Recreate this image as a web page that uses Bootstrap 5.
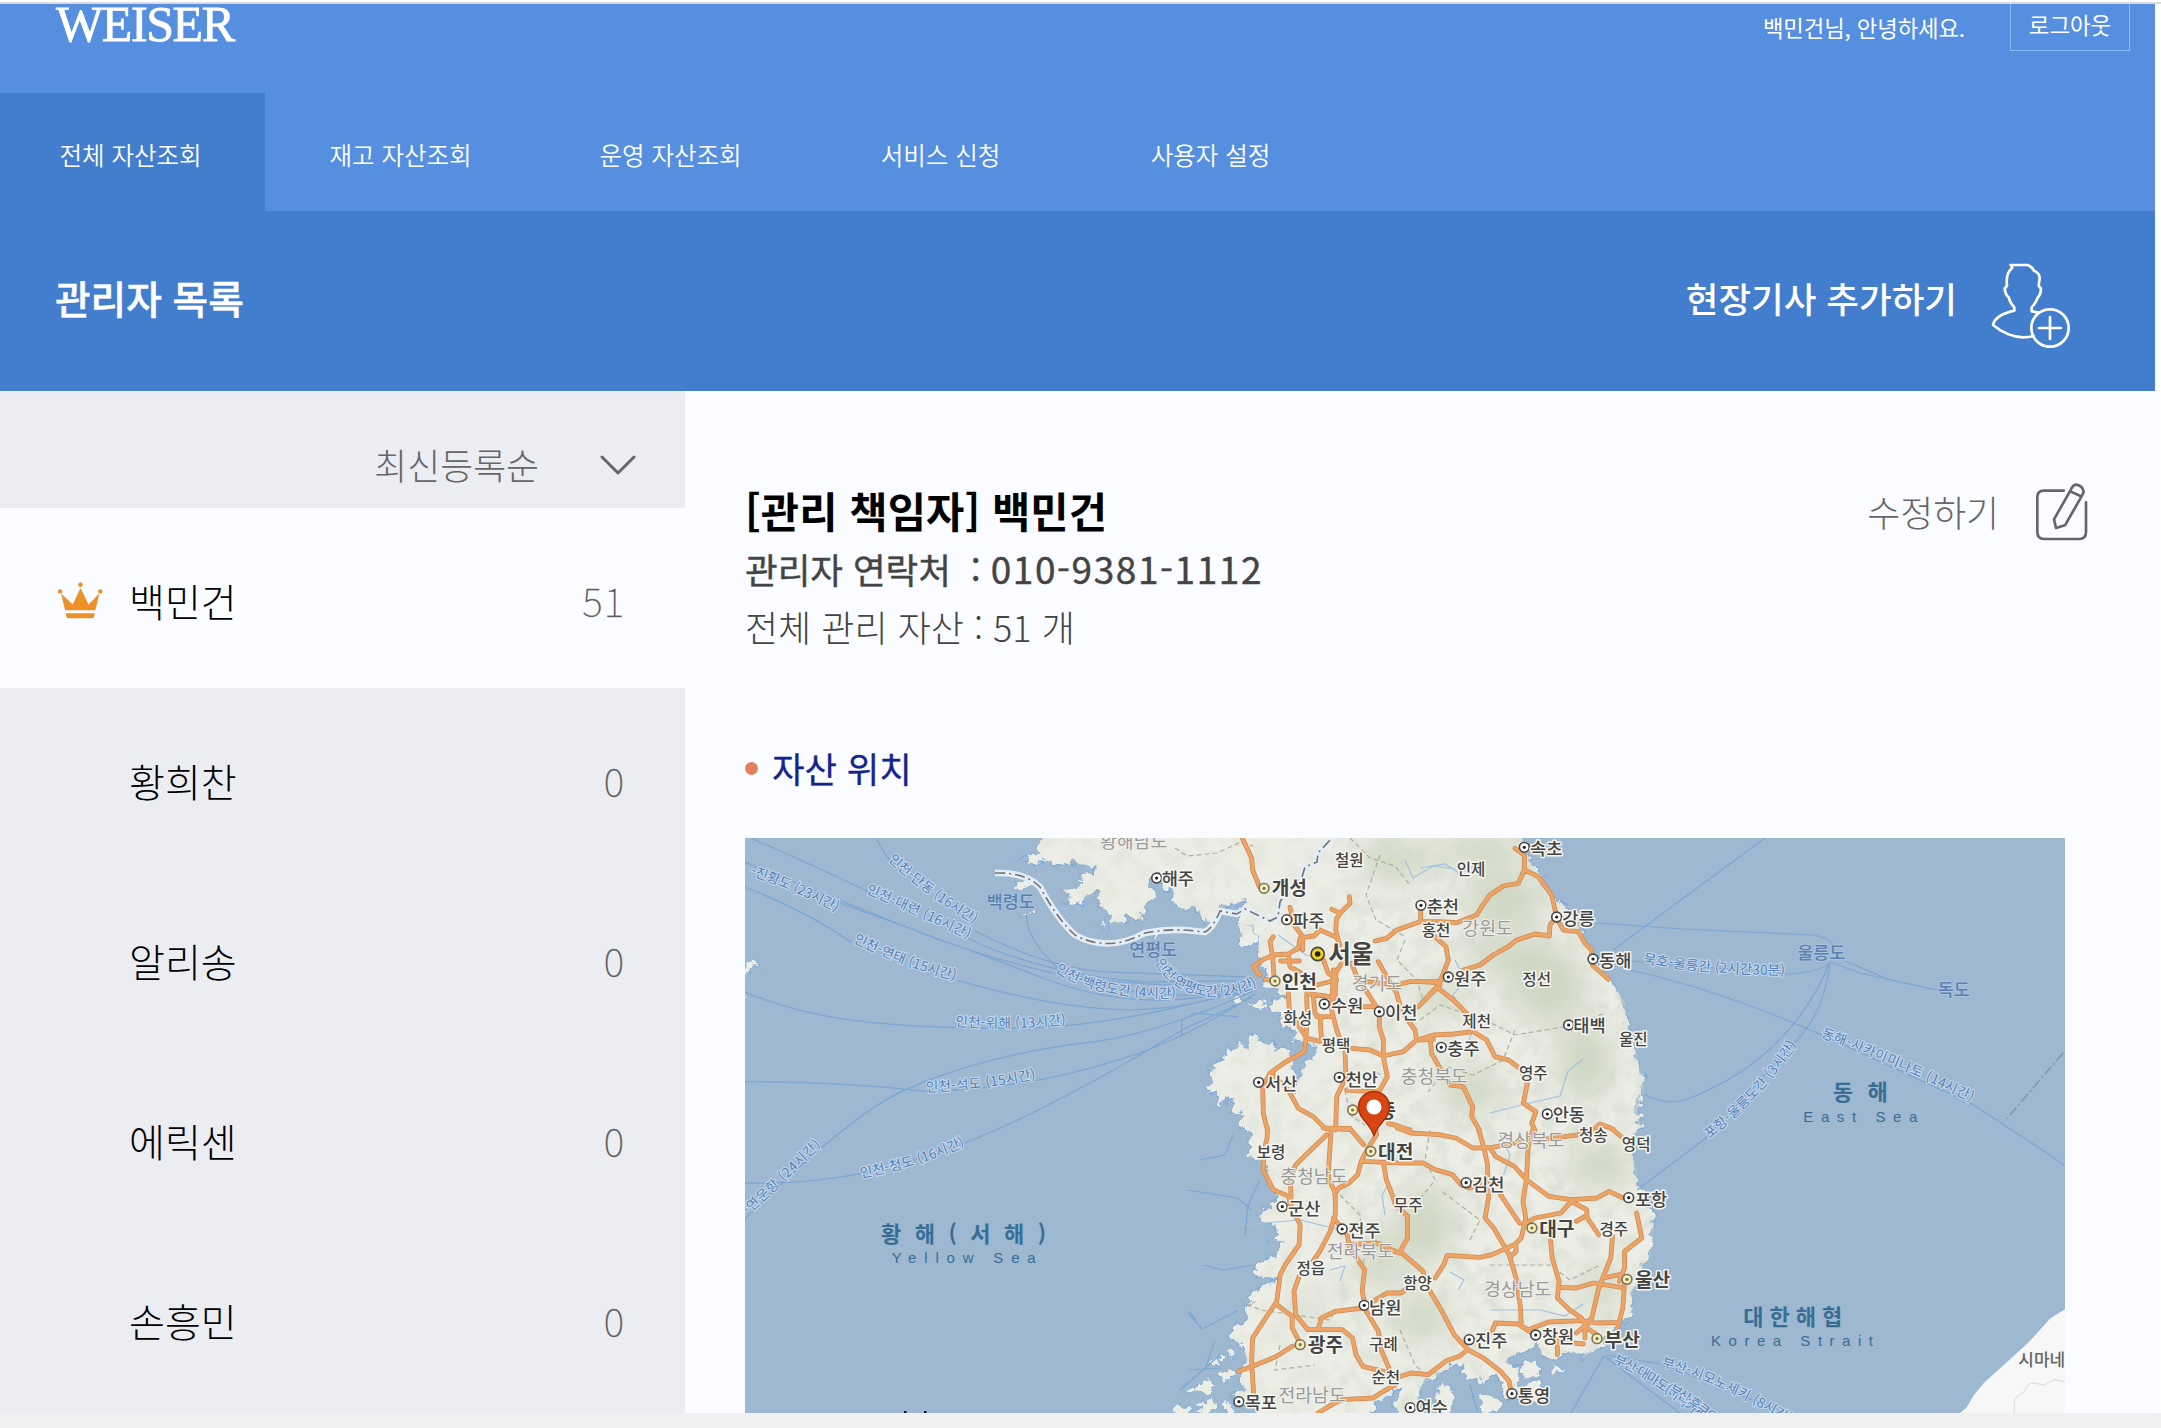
<!DOCTYPE html>
<html lang="ko">
<head>
<meta charset="utf-8">
<title>WEISER</title>
<link href="https://cdn.jsdelivr.net/npm/bootstrap@5.3.0/dist/css/bootstrap.min.css" rel="stylesheet">
<style>
body{font-family:"Noto Sans CJK KR","Noto Sans",sans-serif;background:#fcfdff;width:2161px;height:1428px;overflow:hidden;color:#000}
.topline{height:4px;border-bottom:2px solid #d9dbe0;background:#fff}
.page-w{width:2155px}
.head{background:#568fdf;height:207px;color:#fff}
.head-top{height:89px;padding:0 25px 0 56px}
.logo{font-family:"Liberation Serif",serif;font-size:50px;line-height:50px;letter-spacing:-1.4px;margin-top:-5px;-webkit-text-stroke:.8px #fff}
.hello{font-size:22.3px;line-height:30px;margin:8px 45px 0 0;letter-spacing:-.1px}
.logout{width:120px;height:47px;border:1px solid #8cbcf8;border-top:0;font-size:22.4px;line-height:35px;color:#fff;border-radius:0;padding:0 0 6px}
.tabs-main{height:118px;gap:5px}
.tabs-main .nav-link{width:265px;height:118px;padding:6px 4px 0 0;color:#fff;font-size:24.5px;display:flex;align-items:center;justify-content:center;font-weight:350}
.tabs-main .nav-link.active{background:#437dce}
.subbar{background:#437dce;height:180px;color:#fff;padding:0 84px 0 55px}
.subbar h1{font-size:38.7px;font-weight:500;margin:0;padding-bottom:8px;-webkit-text-stroke:.5px #fff}
.add{font-size:35.5px;font-weight:500;gap:34px}
.add span{padding-bottom:6px}
.add svg{margin-top:8px}
.work{height:1022px;background:#fafcff}
.side{width:685px;background:#ecedf3}
.sort{height:117px;padding:31px 49px 0 0;gap:61px;font-size:35.8px;font-weight:300;color:#666}
.person{height:180px;padding:5px 60px 0 57px;font-size:39px;font-weight:300}
.person.on{background:#fafcff}
.ico-slot{width:72px}
.num{font-weight:100;color:#555;font-size:39px;letter-spacing:1px;-webkit-text-stroke:.3px #777}
.detail{padding:92px 67px 0 60px}
.who{font-size:41.6px;line-height:55px;font-weight:700;margin:0;letter-spacing:.1px}
.tel{font-size:35.5px;line-height:61px;font-weight:400;color:#444;-webkit-text-stroke:.4px #444}
.tel .digits{letter-spacing:1.6px;font-size:37px}
.tot{font-size:36px;line-height:54px;font-weight:300;color:#444}
.edit{font-size:35.8px;font-weight:300;color:#666;gap:37px}
.loc{font-size:35.3px;line-height:50px;color:#14248f;-webkit-text-stroke:.3px #14248f;gap:14px;margin-top:90px;margin-bottom:45px}
.loc i{width:13px;height:13px;border-radius:50%;background:#e5805f}
.map{display:block;width:1320px;height:575px}
.foot{height:15px;background:#f0f0f0}
.map text{paint-order:stroke;stroke-linejoin:round}
.road path{fill:none;stroke-linejoin:round;stroke-linecap:round;vector-effect:non-scaling-stroke}
.ferry path{fill:none;stroke:#7ba6d4;stroke-width:1.2;vector-effect:non-scaling-stroke}
.t1{font-size:24.5px;font-weight:700}.t2{font-size:19.2px;font-weight:700}.t3{font-size:17.6px;font-weight:500}.t4{font-size:15.6px;font-weight:500}
.t1,.t2,.t3,.t4{fill:#444;stroke:#f6f6f1;stroke-width:3px}
.t5{font-size:18.3px;fill:#999;stroke:#f0f0ea;stroke-width:2px}
.isl{font-size:17.4px;font-weight:500;fill:#5a80b0;stroke:#a9c3de;stroke-width:2px}
.sea{font-size:22px;font-weight:700;fill:#386e96}
.seaen{font-size:15px;fill:#386e96;font-family:"Liberation Sans",sans-serif}
.fl{font-size:13.6px;fill:#557fb3;stroke:#c3d7ec;stroke-width:2.2px}
</style>
<script src="https://cdn.jsdelivr.net/npm/bootstrap@5.3.0/dist/js/bootstrap.bundle.min.js"></script>
</head>
<body>
<div class="topline"></div>
<header class="head page-w">
  <div class="head-top d-flex justify-content-between align-items-start">
    <div class="logo">WEISER</div>
    <div class="d-flex align-items-start">
      <span class="hello">백민건님, 안녕하세요.</span>
      <button class="logout btn">로그아웃</button>
    </div>
  </div>
  <nav class="nav tabs-main">
    <a class="nav-link active">전체 자산조회</a><a class="nav-link">재고 자산조회</a><a class="nav-link">운영 자산조회</a><a class="nav-link">서비스 신청</a><a class="nav-link">사용자 설정</a>
  </nav>
</header>
<section class="subbar page-w d-flex justify-content-between align-items-center">
  <h1>관리자 목록</h1>
  <div class="add d-flex align-items-center"><span>현장기사 추가하기</span>
    <svg width="80" height="87" viewBox="1050 786 240 261" fill="none" stroke="#fff" stroke-width="8" stroke-linejoin="round" stroke-linecap="round"><path d="M1178 1008Q1165 1012 1146 1012Q1098 1010 1056 975Q1062 945 1120 932V922Q1106 908 1103 892Q1093 885 1091 866L1098 857Q1093 820 1114 803L1109 795H1160Q1173 800 1179 812Q1196 818 1196 835L1193 857L1200 866Q1199 885 1190 893Q1186 908 1172 922V934L1192 938"/><circle cx="1227" cy="984" r="56"/><path d="M1194 984h66M1227 951v66"/></svg>
  </div>
</section>
<main class="work page-w d-flex">
  <aside class="side">
    <div class="sort d-flex justify-content-end align-items-center"><span>최신등록순</span><svg width="36" height="20" viewBox="0 0 36 20" fill="none" stroke="#666" stroke-width="3" stroke-linecap="round" stroke-linejoin="round"><path d="M2 2L18 18L34 2"/></svg></div>
    <div class="person on d-flex align-items-center"><span class="ico-slot d-flex"><svg width="46" height="37" viewBox="128 578 102 110" preserveAspectRatio="none" fill="#ed9028"><path d="M137 612L163 645L180 596L198 645L222 612L213 662H146ZM147 671H212L209 686H150Z"/><ellipse cx="135" cy="606" rx="5" ry="6.5"/><ellipse cx="180" cy="586" rx="5" ry="6.5"/><ellipse cx="224" cy="606" rx="5" ry="6.5"/></svg></span><span>백민건</span><span class="num ms-auto">51</span></div>
    <div class="person d-flex align-items-center"><span class="ico-slot"></span><span>황희찬</span><span class="num ms-auto">0</span></div>
    <div class="person d-flex align-items-center"><span class="ico-slot"></span><span>알리송</span><span class="num ms-auto">0</span></div>
    <div class="person d-flex align-items-center"><span class="ico-slot"></span><span>에릭센</span><span class="num ms-auto">0</span></div>
    <div class="person d-flex align-items-center"><span class="ico-slot"></span><span>손흥민</span><span class="num ms-auto">0</span></div>
  </aside>
  <section class="detail flex-grow-1">
    <div class="d-flex justify-content-between align-items-start">
      <div>
        <h2 class="who">[관리 책임자] 백민건</h2>
        <div class="tel">관리자 연락처&nbsp; : <span class="digits">010-9381-1112</span></div>
        <div class="tot">전체 관리 자산 : 51 개</div>
      </div>
      <div class="edit d-flex align-items-center"><span>수정하기</span>
        <svg width="52" height="58" viewBox="709 71 156 174" fill="none" stroke="#666" stroke-width="8" stroke-linecap="round" stroke-linejoin="round"><path d="M792 94H733Q713 94 713 114V218Q713 239 733 239H839Q859 239 859 218V129M763 180L812 94Q819 77 829 76Q850 79 852 98L847 109L796 198L769 206ZM812 96L842 110"/></svg>
      </div>
    </div>
    <div class="loc d-flex align-items-center"><i></i><span>자산 위치</span></div>
    <svg class="map" id="map" viewBox="745 838 1320 575">
      <defs>
        <filter id="rough" x="-5%" y="-5%" width="110%" height="110%"><feTurbulence type="fractalNoise" baseFrequency=".1" numOctaves="4" seed="4"/><feDisplacementMap in="SourceGraphic" scale="15" xChannelSelector="R" yChannelSelector="G"/></filter>
        <filter id="relief" x="0" y="0" width="100%" height="100%"><feTurbulence type="fractalNoise" baseFrequency=".06" numOctaves="5" seed="9"/><feColorMatrix values="0 0 0 0 .66  0 0 0 0 .70  0 0 0 0 .60  2.2 0 0 0 -.9"/><feComposite in2="SourceGraphic" operator="in"/></filter>
        <filter id="soft" x="-50%" y="-50%" width="200%" height="200%"><feGaussianBlur stdDeviation="15"/></filter>
        <path id="land" d="M1048 830L1038 847 1034 854 1020 859 1032 862 1043 861 1055 866 1073 862 1092 868 1090 875 1078 877 1082 883 1073 888 1062 889 1070 897 1065 901 1078 902 1090 897 1098 891 1098 904 1107 910 1110 920 1107 931 1113 925 1123 925 1127 916 1140 920 1145 908 1153 902 1153 887 1148 876 1158 872 1162 887 1173 891 1170 901 1185 910 1192 905 1200 913 1207 927 1220 910 1243 902 1237 913 1238 925 1242 945 1257 948 1262 963 1265 977 1270 987 1283 993 1277 1000 1267 1003 1277 1015 1285 1027 1297 1030 1292 1040 1303 1043 1317 1047 1313 1057 1303 1062 1300 1073 1295 1095 1292 1075 1292 1050 1283 1048 1267 1043 1257 1038 1247 1037 1248 1048 1240 1040 1235 1048 1225 1052 1220 1060 1210 1068 1212 1080 1207 1092 1215 1093 1220 1107 1227 1097 1233 1102 1232 1113 1242 1113 1240 1130 1247 1128 1251 1155 1266 1165 1268 1181 1277 1195 1273 1206 1258 1213 1263 1225 1277 1228 1268 1241 1284 1243 1273 1255 1253 1268 1263 1278 1277 1278 1256 1291 1244 1305 1247 1315 1230 1336 1239 1345 1247 1361 1239 1373 1242 1391 1230 1398 1253 1405 1256 1425 1370 1425 1377 1403 1394 1391 1404 1388 1394 1400 1401 1425 1425 1425 1418 1395 1427 1381 1445 1371 1461 1361 1463 1378 1480 1381 1497 1376 1509 1400 1521 1391 1518 1368 1506 1358 1528 1351 1535 1341 1545 1355 1556 1361 1566 1351 1583 1358 1600 1348 1609 1335 1621 1325 1633 1313 1633 1291 1643 1278 1643 1265 1650 1255 1654 1228 1652 1205 1643 1188 1637 1185 1637 1168 1630 1148 1641 1123 1637 1110 1644 1090 1642 1073 1637 1063 1638 1047 1628 1027 1625 1003 1613 983 1593 953 1585 937 1577 920 1557 897 1543 880 1530 860 1520 830Z"/>
        <clipPath id="landclip"><use href="#land"/></clipPath>
      </defs>
      <rect x="745" y="838" width="1320" height="575" fill="#9db8d0"/>
      <g filter="url(#rough)">
        <use href="#land" fill="#ecede6" stroke="#86acd4" stroke-width="1.5"/>
        <g fill="#ecede6" stroke="#86acd4">
          <path d="M1014 884l12-3 4 3-6 8-8-1zM1020 914l8-3 6 4zM1149 937l8-3 2 4zM745 964l10-1 6 3-9 3-7 4zM745 992l3 3-3 4zM1096 927l9-8-3 7zM1231 1000l10-3 3 6-8 4zM1248 1002l14-3 5 8-12 3zM1241 922l14 3 3 20-14 2-6-10z"/>
          <path d="M1175 1408l14-5 6 8-18 6zM1182 1393l12-7 4 5-10 6zM1196 1385l14-6 7 7-10 9-12-3zM1195 1403l18-6 4 10-14 9zM1222 1405l10-3 5 8-13 3zM1208 1360l12-2 3 8-12 3zM1224 1350l10-2 2 9-9 1zM1218 1373l12-5 4 9-12 5zM1435 1392l12-10 7 10-2 22-14 4zM1480 1397l12-5 8 10-3 14-15-4zM1521 1366l12-6 9 9-9 9-12-3zM1522 1385l18-5 9 9-7 14-20-2zM1552 1366l12 2-3 7-9-2z"/>
        </g>
      </g>
      <g clip-path="url(#landclip)">
        <g fill="#b9c6a7" opacity=".62" filter="url(#soft)"><ellipse cx="1395" cy="860" rx="35" ry="18"/><ellipse cx="1505" cy="900" rx="38" ry="26"/><ellipse cx="1548" cy="985" rx="36" ry="36"/><ellipse cx="1480" cy="850" rx="45" ry="14"/><ellipse cx="1510" cy="955" rx="50" ry="16"/><ellipse cx="1440" cy="1000" rx="30" ry="12"/><ellipse cx="1585" cy="1060" rx="24" ry="40"/><ellipse cx="1470" cy="1090" rx="30" ry="20"/><ellipse cx="1425" cy="1225" rx="26" ry="38"/><ellipse cx="1420" cy="1318" rx="28" ry="20"/><ellipse cx="1600" cy="1165" rx="32" ry="20"/><ellipse cx="1380" cy="1260" rx="18" ry="30"/><ellipse cx="1600" cy="1290" rx="14" ry="24"/><ellipse cx="1310" cy="1310" rx="15" ry="12"/></g>
        <rect x="1010" y="838" width="330" height="575" filter="url(#relief)" opacity=".38"/>
        <rect x="1340" y="838" width="330" height="575" filter="url(#relief)" opacity=".7"/>
      </g>
      <g fill="none" stroke="#aeb09b" stroke-width="1.2" stroke-dasharray="5 3"><path d="M1175 848l12 8 30-3 22-10 14 3M1350 838l20 20 25 8 14 18M1380 855l-14 40 10 25 28 16M1405 940l-8 20 20 20 6 20M1420 1020l20-15 45 15 30 15 60-10 30-12M1515 1030l-12 30-30 15-25-8-20 25M1345 1090l5 25 15 10M1430 1130l-5 30 10 20-20 25M1340 1195l20 20 5 60M1470 1240l10-20-40-30M1240 1300l20 10 70 10 5-10M1490 1265l60 0 20 15 30-15M1400 1330l15 35 10 10M1280 1345l-5 25 40-5"/></g>
      <g fill="none" stroke="#a3c2dd" stroke-width="1.2"><path d="M1278 935l28 20 20 5M1405 860l8 18 20-12 22 3M1420 868l25-4 14 9 18-8M1455 960l10 20-12 15 20 35-6 15M1490 1113l40-10 30-7 8-25 15-12M1385 1215l-3-20 7-12M1330 1270l15-4-5 15M1450 1272l14 8-6 10M1500 1135l10 20-8 25M1490 1310l50 0 25 6 18-12M1240 1225l60-5 50 12M1370 1080l6-8 5 3"/></g>
      <g class="ferry" transform="translate(745 830) scale(.33333 .38139)"><path d="M395 22Q420 70 450 90M690 265Q900 360 1080 372L1500 385M20 22Q250 110 400 175M670 285Q900 380 1200 398L1510 395M0 85Q300 190 500 260T900 370T1500 410M280 190Q600 290 900 390T1510 412M0 150Q180 210 320 295M640 395Q900 460 1100 470T1500 415M0 425Q150 480 330 500T800 520T1500 420M0 660Q300 660 540 685Q850 680 1130 600Q1320 550 1530 430M0 1020Q300 760 460 690Q700 590 1050 555Q1250 530 1530 420M0 925Q330 935 660 820Q900 740 1310 525L1520 440M845 220Q840 280 935 360Q1100 450 1500 430M1232 300Q1230 380 1290 400T1500 430M1310 540V500L1350 480L1480 490"/></g>
      <g class="ferry"><path d="M1613 950L1765 838M1597 923L1683 929 1813 935Q1830 938 1834 946M1630 961L1788 974Q1822 972 1830 962M1630 970Q1720 990 1822 1035L1972 1104 2050 1155 2065 1166M1830 962Q1825 1010 1797 1040T1706 1138L1637 1190M1830 962Q1790 1060 1685 1100Q1665 1105 1645 1095M1830 962L1860 973 1937 990M1845 961L1890 980 1937 990M1604 1356L1571 1413M1604 1356L1680 1413M1606 1355L1666 1365 1785 1413M1470 1385l8 28M1187 1190l50 8 15 12M1203 1265l20 5 30-5M1190 1312l6 8-8-7 14 16 35-18M1260 1180l-12 25-3 30M1200 1160l25-5 8-20M1180 1390l40-35M1215 1340l-10 30M1190 1370l30-2"/></g>
      <path d="M2063 1053L2004 1122" fill="none" stroke="#7f929f" stroke-width="1.3" stroke-dasharray="10 3 2 3"/>
      <g transform="translate(1680 830) scale(.33333 .38139)"><path d="M822 1540L858 1515 880 1482 910 1450 1045 1343 1110 1280 1165 1250V1540Z" fill="#f7f7f7" stroke="#8ab4dc" stroke-width="2"/><path d="M1003 1535V1492L1035 1470Q1042 1450 1060 1450L1090 1455 1125 1441 1155 1447" fill="none" stroke="#ddd" stroke-width="3"/></g>
      <g fill="none"><path d="M995 873Q1025 872 1040 887Q1058 920 1075 935Q1108 953 1145 933Q1170 928 1195 931L1205 932Q1213 928 1220 911L1237 914 1245 909 1270 921 1278 917 1280 902 1287 890 1302 877 1305 867 1317 862 1318 853 1332 838" stroke="#e4edf6" stroke-width="6.5" stroke-linejoin="round"/><path d="M995 873Q1025 872 1040 887Q1058 920 1075 935Q1108 953 1145 933Q1170 928 1195 931L1205 932Q1213 928 1220 911L1237 914 1245 909 1270 921 1278 917 1280 902 1287 890 1302 877 1305 867 1317 862 1318 853 1332 838" stroke="#737373" stroke-width="1.6" stroke-dasharray="10 4 2 4"/></g>
      <g class="road" id="roads"></g>
      <g id="labels"></g>
      <path d="M1374 1136C1371 1124 1358.500 1119 1358.500 1107A15.500 15.500 0 0 1 1389.500 1107C1389.500 1119 1377 1124 1374 1136Z" fill="#d94413" stroke="#a5310c" stroke-width="1.5"/><circle cx="1374" cy="1107" r="7.500" fill="#fff"/>
      <path d="M904 1411h2.500v2h-2.500zM924 1411h2.500v2h-2.500z" fill="#111"/>
    </svg>
  </section>
</main>
<div class="foot"></div>
<script>
const NS='http://www.w3.org/2000/svg';
const el=(n,a,p,t)=>{const e=document.createElementNS(NS,n);for(const k in a)e.setAttribute(k,a[k]);if(t)e.textContent=t;p.appendChild(e);return e};
// map sheets: origin x, origin y, units per pixel horizontally and vertically
const S={a:[745,830,3,2.622],b:[1170,830,3,3],c:[1420,830,3,3],d:[1170,1128,2.904,3],e:[1680,830,3,2.622]};
const roads={
b:'M215 20L245 85 248 120 268 170M360 232L372 285 400 322 432 318 450 300 500 322 510 345M538 200L540 220 515 245 500 265 497 300 505 330M485 238L508 248M390 325L385 355 355 372 310 375 280 388 252 408 262 430M310 320L300 335 308 380 312 440M332 393H388M398 322V360M355 372L360 410 395 430M252 408L270 435M285 448L315 453M460 390L475 430 490 440 515 400M490 420L485 540 500 600 515 640M498 420L495 520M440 465L500 450M440 560L485 560M355 490L358 540 385 585 410 625 455 635 450 560M410 500L412 560 408 625 402 665 340 700 300 730 278 770 280 850 292 900M410 490L480 500M430 500L435 550 455 565M500 530L620 530M545 400L560 440 600 500 628 545 628 590 640 630 640 680 652 740 630 780M545 655L600 660 640 678 700 665 740 630 790 628M625 395L650 440 680 490 695 545 735 600 740 630M590 455L680 465 720 455 810 455M745 530L775 500 810 465M615 333L650 325 680 300 750 275 810 280M752 230V275M525 665L528 740 500 800 497 900M530 780L600 785 630 780M305 730L355 780 385 835 430 860 465 895 540 895M655 880L690 890 720 900',
c:'M285 55L313 75V120L295 160 250 168 210 195 185 230 170 255 110 278 60 275 0 275M318 122L355 140 395 195 410 260 390 285 388 318 345 312 290 330 265 350 220 375 180 405 130 420M410 265L430 300 475 305 495 340 515 360 517 405 565 448M45 320L78 350 85 390 70 430 55 465 0 525M0 455L50 458 85 440M55 475L100 510 140 550 160 605 200 630 225 680 265 690 300 715 322 760 310 820 348 845 335 880 345 900M0 628L40 615 100 612 160 605M30 620L35 670 60 715 90 765 130 770 158 830 155 860 178 900M520 900L540 882 580 898',
d:'M283 0L282 30 275 60 270 125 300 185 345 205 350 235M445 0L525 5 562 50M597 0L600 20 575 60 555 100 545 140 520 165 490 180 478 200M468 5L462 100 460 150 480 195 480 260 465 310 435 370 415 400M455 20L400 75 365 110 350 150 352 240 378 290 375 350 335 410 320 440 310 520 265 590 240 630 237 700 243 800M560 100L620 103 680 105 735 105 770 125 820 140 845 170 870 180 900 165M620 105L628 155 645 200 655 230 690 265 690 330 668 370 735 430 738 450M660 0L700 15 780 20 830 30 880 60 935 58 1000 45 1080 35 1190 20M895 0L912 60 922 110 925 210 915 270 940 300 985 380 1005 450 1018 540 1020 595M930 60L945 85 1000 115 1035 155 1100 205 1165 215 1240 210 1275 190 1320 212M1055 0L1040 60 1035 155 1025 220 1033 270 1020 330 1000 350 935 380 900 388 805 382 795 410 770 450M960 200L985 240 1015 285M1025 290L1060 270 1135 255 1165 220 1210 245 1212 270 1245 320M1180 280L1210 262M475 270L515 320 520 350 600 345 665 375M520 355L565 425 558 490 570 550 605 610 615 670 640 730M590 520L630 495 670 495 690 480M755 490L790 550 825 620 865 665 910 690 960 730 985 760 990 790M375 445L360 490 365 560 400 605 500 605 530 630 540 680 560 715 640 735M310 530L355 565 355 600 375 640M430 605L440 570 480 550 560 540M200 730L240 715 310 685 355 655M670 745L700 735 750 740 800 700 840 685 865 665M430 855L470 830 500 815 590 810 620 790 655 770M1105 335L1110 390 1130 460 1125 510 1160 545 1195 570 1210 600M1130 478L1180 480 1230 465 1310 478M1260 450L1305 440 1320 460 1315 540 1300 600M1285 325L1280 390 1245 480 1225 570 1205 590M1355 255L1370 330 1320 370 1320 420 1305 460M935 610L945 585 1010 588 1040 605 1100 582 1195 578 1240 585 1305 583M1020 595L1050 615M1125 630V680M1130 640L1200 648M1210 600L1240 620M1205 580V630M1180 615L1220 580M1005 345L1005 370 990 385M1280 0L1315 30'};
const R=document.getElementById('roads'),L=document.getElementById('labels');
for(const [c,w] of [['#cf8a52',4.8],['#eba466',3.3]])for(const k in roads){const s=S[k];el('path',{d:roads[k],stroke:c,'stroke-width':w,transform:`translate(${s[0]} ${s[1]}) scale(${1/s[2]} ${1/s[3]})`},R)}
const size={t1:24.5,t2:19.2,t3:17.6,t4:15.6,t5:18.3,isl:17.4,sea:22,seaen:15};
// ferry labels run along their own curves
[['-진황도 (23시간)','M750 875Q792 889 838 913'],['인천-단동 (16시간)','M888 860Q922 893 976 925'],['인천-대련 (16시간)','M866 893Q915 914 970 940'],['인천-연태 (15시간)','M853 942Q900 966 957 981'],['인천-백령도간 (4시간)','M1055 971Q1095 1000 1178 998'],['인천-연평도간 (2시간)','M1155 962Q1170 990 1205 996Q1235 998 1259 985'],['인천-위해 (13시간)','M955 1026Q1010 1031 1068 1024'],['인천-석도 (15시간)','M926 1092Q985 1090 1038 1078'],['인천-청도 (16시간)','M861 1178Q920 1167 967 1145'],['-연운항 (24시간)','M748 1215Q776 1190 823 1144'],['묵호-울릉간 (2시간30분)','M1643 963Q1710 975 1787 975'],['포항-울릉도간 (3시간)','M1709 1139Q1760 1100 1798 1043'],['동해-사카이미나토 (14시간)','M1821 1037Q1890 1062 1973 1103'],['부산-대마도(히타카쓰)','M1613 1363Q1655 1380 1705 1426'],['부산-시모노세키 (8시간)','M1661 1366Q1725 1385 1790 1425'],['부산-후쿠오카','M1668 1392Q1695 1407 1722 1432']].forEach(([t,d],i)=>{
 const p=el('path',{id:'f'+i,d,fill:'none'},L),x=el('text',{class:'fl'},L),n=p.getTotalLength();
 el('textPath',{href:'#f'+i,textLength:n-2,lengthAdjust:'spacing'},x,t)});
// sheet, x, y centre, text, style, marker x, marker y, width
const D=`a 1065 30 황해남도 t5
b 545 460 경기도 t5
b 692 738 충청북도 t5
c 127 295 강원도 t5
d 320 145 충청남도 t5
d 950 37 경상북도 t5
d 455 370 전라북도 t5
d 912 484 경상남도 t5
d 315 803 전라남도 t5
b 495 92 철원 t4
b 340 565 화성 t4
b 455 645 평택 t4
c 5 302 홍천 t4
c 110 117 인제 t4
c 307 449 정선 t4
c 127 573 제천 t4
c 597 627 울진 t4
c 297 730 영주 t4
d 1188 22 청송 t4
d 252 73 보령 t4
d 1312 50 영덕 t4
d 650 232 무주 t4
d 367 420 정읍 t4
d 677 467 함양 t4
d 1247 303 경주 t4
d 578 648 구례 t4
d 585 747 순천 t4
a 1250 127 해주 t3 1235 126
b 367 271 파주 t3 350 269
b 483 527 수원 t3 463 522
b 645 548 이천 t3 628 545
b 285 761 서산 t3 266 757
b 527 747 천안 t3 508 742
c 20 230 춘천 t3 3 226
c 330 55 속초 t3 313 52
c 427 265 강릉 t3 410 261
c 537 391 동해 t3 519 387
c 102 445 원주 t3 85 441
c 460 587 태백 t3 446 585
c 82 655 충주 t3 64 652
c 398 854 안동 t3 382 852
d 877 168 김천 t3 860 164
d 343 242 군산 t3 326 236
d 518 307 전주 t3 500 303
d 578 537 남원 t3 564 532
d 1350 213 포항 t3 1332 209
d 886 638 진주 t3 869 635
d 1080 624 창원 t3 1062 621
d 217 824 목포 t3 200 821
d 713 838 여수 t3 698 839
d 1010 801 통영 t3 993 797
b 305 174 개성 t2 282 175
b 335 455 인천 t2 315 453
b 572 842 세종 t2 548 840
d 604 72 대전 t2 583 70
d 1072 302 대구 t2 1051 300
d 1350 457 울산 t2 1327 454
d 400 651 광주 t2 378 650
d 1262 635 부산 t2 1240 632
b 475 371 서울 t1 443 372
a 725 187 백령도 isl
a 1153 314 연평도 isl
e 352 322 울릉도 isl
e 773 418 독도 isl
a 408 1058 황_해_(_서_해_) sea - - 165
a 440 1120 Yellow_Sea seaen - - 144
e 458 687 동_해 sea - - 55
e 370 752 East_Sea seaen - - 114
e 190 1277 대한해협 sea - - 99
e 93 1338 Korea_Strait seaen - - 162
e 1015 1390 시마네 jp`;
for(const r of D.split('\n')){const [k,x,y,t,c,mx,my,w]=r.split(' '),s=S[k],X=v=>s[0]+v/s[2],Y=v=>s[1]+v/s[3],z=size[c]||17;
 if(mx&&mx!='-'){const m={cx:X(+mx),cy:Y(+my)},cap=c=='t1';
  el('circle',{...m,r:cap?6.6:4.9,fill:cap?'#f2d21c':c=='t2'?'#f8efb4':'#fff',stroke:c=='t2'?'#77725c':'#444','stroke-width':1.6},L);
  el('circle',{...m,r:cap?2.8:1.6,fill:c=='t2'?'#77725c':'#222'},L)}
 const a={class:c,x:X(+x),y:Y(+y)+z*.37};if(w)a.textLength=w;
 if(c=='jp'){a['font-size']=17;a['font-weight']=500;a.fill='#666'}
 el('text',a,L,t.replace(/_/g,' '))}
</script>
</body>
</html>
